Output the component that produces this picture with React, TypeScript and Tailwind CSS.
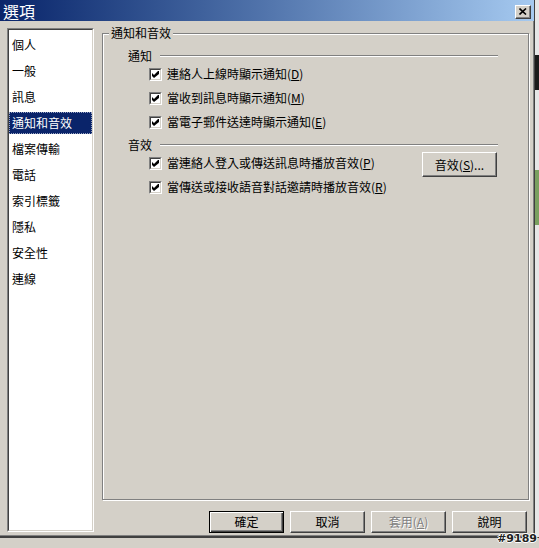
import React from "react";

const NAV_ITEMS = ["個人", "一般", "訊息", "通知和音效", "檔案傳輸", "電話", "索引標籤", "隱私", "安全性", "連線"];
const SELECTED = "通知和音效";

const raised =
  "border border-t-white border-l-white border-b-[#404040] border-r-[#404040] shadow-[inset_-1px_-1px_0_#808080,inset_1px_1px_0_#d4d0c8]";

function CheckBox() {
  return (
    <span className="flex h-[13px] w-[13px] shrink-0 border border-t-[#808080] border-l-[#808080] border-b-white border-r-white">
      <span className="flex flex-1 items-center justify-center border border-t-[#404040] border-l-[#404040] border-b-[#d4d0c8] border-r-[#d4d0c8] bg-white">
        <svg width="7" height="7" viewBox="0 0 7 7">
          <path d="M0 2 L2 4 L6 0 L7 0 L7 3 L2 7 L0 5 Z" fill="#000" />
        </svg>
      </span>
    </span>
  );
}

function CheckRow({ label, hotkey }: { label: string; hotkey: string }) {
  return (
    <div className="flex h-[24px] items-center gap-[5px]">
      <CheckBox />
      <span className="leading-[14px]">
        {label}(<u>{hotkey}</u>)
      </span>
    </div>
  );
}

function SubHeader({ text }: { text: string }) {
  return (
    <div className="flex h-[12px] items-center gap-[8px] pl-[25px]">
      <span className="leading-[12px]">{text}</span>
      <span className="flex-1 border-t border-b border-t-[#808080] border-b-white" />
    </div>
  );
}

function Button({ children, primary, disabled }: { children: React.ReactNode; primary?: boolean; disabled?: boolean }) {
  const frame = primary
    ? "border border-black shadow-[inset_1px_1px_0_#fff,inset_-1px_-1px_0_#404040,inset_-2px_-2px_0_#808080]"
    : raised;
  return (
    <div
      className={`flex h-[22px] w-[75px] items-center justify-center bg-[#d4d0c8] leading-[14px] ${frame} ${
        disabled ? "text-[#808080] [text-shadow:1px_1px_0_#fff]" : "text-black"
      }`}
    >
      {children}
    </div>
  );
}

export default function App() {
  return (
    <div className="relative flex h-[548px] w-[539px] flex-col overflow-hidden bg-[#d4d0c8] font-['Noto_Sans_CJK_TC',sans-serif] text-[12px] text-black">
      <div className="flex h-[537px]">
        {/* dialog window */}
        <div className="flex w-[535px] flex-col border-r border-b border-[#404040] shadow-[inset_-1px_-1px_0_#808080]">
          <div className="flex h-[21px] items-center bg-linear-to-r from-[#0a246a] to-[#a6caf0] pl-[3px] pr-[3px]">
            <span className="text-[16px] leading-[20px] text-white">選項</span>
            <div className={`ml-auto mt-[2px] flex h-[14px] w-[16px] items-center justify-center bg-[#d4d0c8] ${raised}`}>
              <svg width="8" height="7" viewBox="0 0 8 7">
                <path d="M0.5 0.5 L7 6.5 M7 0.5 L0.5 6.5" stroke="#000" strokeWidth="1.6" />
              </svg>
            </div>
          </div>

          <div className="flex flex-1 pl-[7px] pt-[7px]">
            {/* category list */}
            <div className="flex h-[504px] w-[87px] border border-t-[#808080] border-l-[#808080] border-b-white border-r-white">
              <div className="flex flex-1 flex-col gap-[4px] border border-t-[#404040] border-l-[#404040] border-b-[#d4d0c8] border-r-[#d4d0c8] bg-white pt-[4px]">
                {NAV_ITEMS.map((item) =>
                  item === SELECTED ? (
                    <div
                      key={item}
                      className="flex h-[22px] items-center border border-dotted border-[#9aa4c0] bg-[#0a246a] pl-[2px] text-white"
                    >
                      {item}
                    </div>
                  ) : (
                    <div key={item} className="flex h-[22px] items-center pl-[3px]">
                      {item}
                    </div>
                  ),
                )}
              </div>
            </div>

            <div className="ml-[8px] flex w-[427px] flex-col">
              {/* group box */}
              <div className="mt-[5px] flex h-[467px] flex-col border border-[#808080] pr-[30px] shadow-[inset_1px_1px_0_#fff,1px_1px_0_#fff]">
                <span className="-mt-[8px] ml-[6px] block h-[14px] w-fit bg-[#d4d0c8] px-[2px] leading-[14px]">通知和音效</span>

                <div className="mt-[10px]">
                  <SubHeader text="通知" />
                </div>
                <div className="flex flex-col pl-[46px]">
                  <CheckRow label="連絡人上線時顯示通知" hotkey="D" />
                  <CheckRow label="當收到訊息時顯示通知" hotkey="M" />
                  <CheckRow label="當電子郵件送達時顯示通知" hotkey="E" />
                </div>

                <div className="mt-[5px]">
                  <SubHeader text="音效" />
                </div>
                <div className="flex pl-[46px]">
                  <div className="flex flex-col">
                    <CheckRow label="當連絡人登入或傳送訊息時播放音效" hotkey="P" />
                    <CheckRow label="當傳送或接收語音對話邀請時播放音效" hotkey="R" />
                  </div>
                  <div className={`ml-auto mr-[1px] mt-[1px] flex h-[25px] w-[75px] items-center justify-center bg-[#d4d0c8] ${raised}`}>
                    音效(<u>S</u>)...
                  </div>
                </div>
              </div>

              {/* dialog buttons */}
              <div className="mt-[11px] flex justify-end gap-[6px] pr-[2px]">
                <Button primary>確定</Button>
                <Button>取消</Button>
                <Button disabled>
                  套用(<u>A</u>)
                </Button>
                <Button>說明</Button>
              </div>
            </div>
          </div>
        </div>

        {/* desktop behind the dialog */}
        <div className="flex w-[4px] flex-col bg-[#e6e6e6]">
          <div className="h-[55px]" />
          <div className="h-[35px] bg-[#1a1a1a]" />
          <div className="h-[80px]" />
          <div className="h-[55px] bg-[#7aa060]" />
        </div>
      </div>

      <div className="flex-1 border-t border-[#404040] bg-[#d4d0c8]" />

      <span className="absolute bottom-[3px] right-[2px] font-['DejaVu_Sans',sans-serif] text-[11px] font-bold leading-[12px] text-[#222] [text-shadow:1px_0_0_#fff,-1px_0_0_#fff,0_1px_0_#fff,0_-1px_0_#fff]">
        #9189
      </span>
    </div>
  );
}
